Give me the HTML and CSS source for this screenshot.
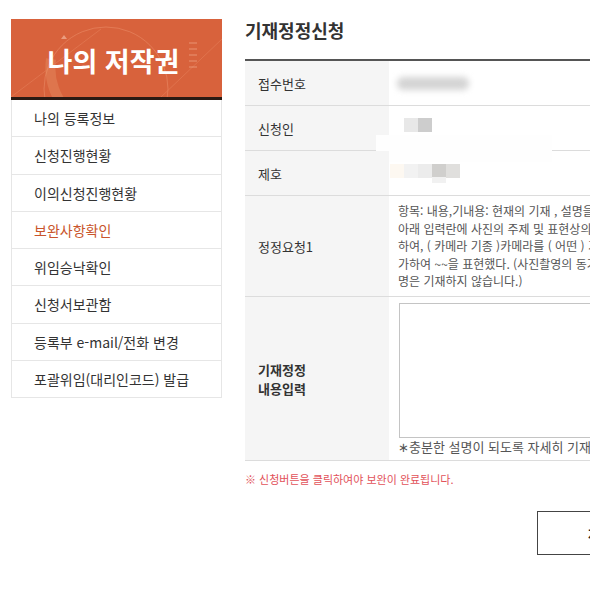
FILE: index.html
```html
<!DOCTYPE html>
<html lang="ko">
<head>
<meta charset="utf-8">
<title>기재정정신청</title>
<link rel="stylesheet" href="styles.css">
</head>
<body>
<div class="page">
  <aside class="sidebar">
    <div class="banner">
      <svg class="banner-deco" width="211" height="78" viewBox="0 0 211 78">
        <circle cx="95" cy="70" r="62" fill="none" stroke="#e98a66" stroke-width="1" opacity="0.6"/>
        <path d="M60 95 A62 62 0 0 1 40 40" fill="none" stroke="#ec9a6e" stroke-width="10" opacity="0.35"/>
        <line x1="0" y1="78" x2="90" y2="10" stroke="#e7835e" stroke-width="1" opacity="0.5"/>
        <line x1="150" y1="78" x2="211" y2="20" stroke="#e7835e" stroke-width="1" opacity="0.5"/>
        <path d="M50 20 L53 16 L56 20 Z" fill="#f2b59b" opacity="0.7"/>
        <g stroke="#f0a98a" stroke-width="1" opacity="0.7">
          <line x1="178" y1="24" x2="186" y2="24"/>
          <line x1="178" y1="30" x2="186" y2="30"/>
          <line x1="178" y1="36" x2="186" y2="36"/>
          <line x1="178" y1="42" x2="186" y2="42"/>
          <line x1="178" y1="48" x2="186" y2="48"/>
        </g>
      </svg>
      <span class="banner-title">나의 저작권</span>
    </div>
    <ul class="menu">
      <li class="menu-item">나의 등록정보</li>
      <li class="menu-item">신청진행현황</li>
      <li class="menu-item">이의신청진행현황</li>
      <li class="menu-item active">보완사항확인</li>
      <li class="menu-item">위임승낙확인</li>
      <li class="menu-item">신청서보관함</li>
      <li class="menu-item">등록부 e-mail/전화 변경</li>
      <li class="menu-item">포괄위임(대리인코드) 발급</li>
    </ul>
  </aside>
  <main class="main">
    <h1 class="title">기재정정신청</h1>
    <div class="table-wrap">
      <div class="row r45">
        <div class="label">접수번호</div>
        <div class="value"><span class="blur-bar"></span></div>
      </div>
      <div class="row r45">
        <div class="label">신청인</div>
        <div class="value"><span class="px-row shift"><i class="px c1"></i><i class="px c2"></i></span></div>
      </div>
      <div class="mask"></div>
      <div class="row r45 over">
        <div class="label">제호</div>
        <div class="value flush"><span class="px-row"><i class="px c3"></i><i class="px c4"></i><i class="px c5"></i><i class="px c6"></i><i class="px c7"></i></span></div>
      </div>
      <div class="row r101">
        <div class="label">정정요청1</div>
        <div class="value text">항목: 내용,기내용: 현재의 기재 , 설명을 기재하여 주시기 바랍니다.<br>아래 입력란에 사진의 주제 및 표현상의 특징을 설명<br>하여, ( 카메라 기종 )카메라를 ( 어떤 ) 기법을 적용<br>가하여 ~~을 표현했다. (사진촬영의 동기 및 과정 설<br>명은 기재하지 않습니다.)</div>
      </div>
      <div class="row r164">
        <div class="label strong">기재정정<br>내용입력</div>
        <div class="value input-cell">
          <div class="textarea"></div>
          <p class="hint">∗충분한 설명이 되도록 자세히 기재하여 주시기 바랍니다.</p>
        </div>
      </div>
      <div class="mask-dot"></div>
    </div>
    <p class="notice">※ 신청버튼을 클릭하여야 보완이 완료됩니다.</p>
    <div class="actions">
      <button class="btn">저장</button>
    </div>
  </main>
</div>
</body>
</html>
```
FILE: styles.css
```css
html, body {
  margin: 0;
  padding: 0;
  width: 590px;
  height: 590px;
  overflow: hidden;
  background: #fff;
}
body {
  font-family: "Noto Sans CJK KR", "Noto Sans", sans-serif;
  color: #333;
}
.page {
  display: flex;
  align-items: flex-start;
  padding-left: 11px;
  width: 1000px;
}
.sidebar {
  width: 211px;
  flex: none;
  margin-top: 19px;
}
.banner {
  position: relative;
  height: 78px;
  background: #d8623c;
  border-bottom: 3px solid #2b1a13;
  display: flex;
  align-items: center;
  justify-content: center;
  overflow: hidden;
}
.banner-deco {
  position: absolute;
  left: 0;
  top: 0;
}
.banner-title {
  position: relative;
  color: #fff;
  font-size: 27px;
  font-weight: 700;
  line-height: 30px;
  margin-top: 6px;
  margin-left: -6px;
}
.menu {
  list-style: none;
  margin: 0;
  padding: 0;
  border: 1px solid #e6e6e6;
  border-top: none;
}
.menu-item {
  height: 36.25px;
  line-height: 36px;
  padding-left: 22px;
  font-size: 14px;
  color: #333;
  border-bottom: 1px solid #e6e6e6;
}
.menu-item:last-child {
  border-bottom: none;
}
.menu-item.active {
  color: #c9542b;
}
.main {
  margin-left: 23px;
  padding-top: 18px;
  width: 420px;
  flex: none;
}
.title {
  margin: 0 0 17px;
  font-size: 18px;
  line-height: 24px;
  font-weight: 700;
  color: #333;
}
.table-wrap {
  position: relative;
  border-top: 2px solid #555;
}
.row {
  display: flex;
  border-bottom: 1px solid #dcdcdc;
}
.row.over {
  position: relative;
}
.r45 { height: 44px; }
.r101 { height: 100px; }
.r164 { height: 163px; }
.label {
  width: 131px;
  flex: none;
  background: #f5f5f5;
  padding-left: 13px;
  display: flex;
  align-items: center;
  font-size: 13px;
  color: #333;
}
.label.strong {
  font-weight: 600;
  line-height: 19px;
}
.value {
  flex: 1;
  padding-left: 9px;
  display: flex;
  align-items: center;
}
.value.flush {
  padding-left: 1px;
}
.value.text {
  font-size: 12px;
  line-height: 17.6px;
  color: #555;
  white-space: nowrap;
  overflow: hidden;
  padding-top: 6px;
  display: block;
}
.blur-bar {
  display: block;
  width: 72px;
  height: 13px;
  margin-left: -1px;
  background: #d4d4d4;
  border-radius: 6px;
  filter: blur(3px);
}
.px-row {
  display: flex;
  margin-top: -4px;
}
.px-row.shift {
  margin-left: 6px;
  margin-top: -6px;
}
.px {
  display: block;
  width: 14px;
  height: 14px;
}
.c1 { background: #e8e8e8; }
.c2 { background: #cdcdcd; }
.c3 { background: #fdf8f1; }
.c4 { background: #f2f2f2; }
.c5 { background: #ececec; }
.c6 { background: #d0cfcd; }
.c7 { background: #e0dfdd; }
.input-cell {
  display: block;
  padding-top: 6px;
}
.textarea {
  height: 133px;
  border: 1px solid #c4c4c4;
  margin-left: 1px;
}
.hint {
  margin: 0;
  font-size: 13px;
  line-height: 18px;
  color: #555;
  white-space: nowrap;
  overflow: hidden;
}
.mask {
  position: absolute;
  left: 131px;
  top: 74px;
  width: 176px;
  height: 27px;
  background: #fefefe;
}
.mask-dot {
  position: absolute;
  left: 187px;
  top: 116px;
  width: 14px;
  height: 6px;
  background: #f1f1f1;
}
.notice {
  margin: 10px 0 0;
  font-size: 11px;
  line-height: 16px;
  color: #e2525a;
}
.actions {
  margin-top: 24px;
  padding-left: 292px;
}
.btn {
  width: 126px;
  height: 44px;
  background: #fff;
  border: 1px solid #444;
  font-family: "Noto Sans CJK KR", sans-serif;
  font-size: 13px;
  font-weight: 700;
  color: #222;
  padding: 0;
}
```
